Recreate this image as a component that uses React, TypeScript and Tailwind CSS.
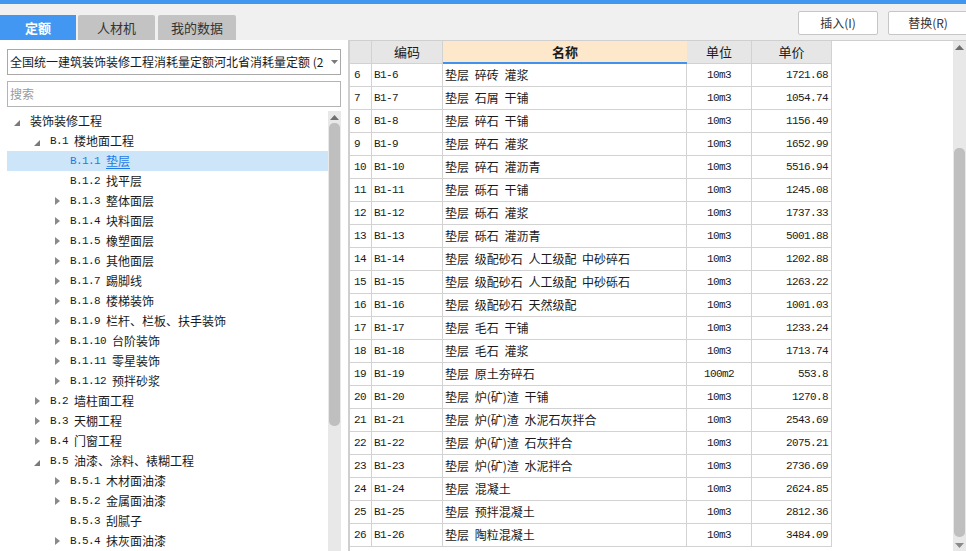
import React from 'react'

type TreeNode = {
  level: number
  code: string
  name: string
  arrow: 'open' | 'closed' | null
  selected?: boolean
}

const tree: TreeNode[] = [
  { level: 0, code: '', name: '装饰装修工程', arrow: 'open' },
  { level: 1, code: 'B.1', name: '楼地面工程', arrow: 'open' },
  { level: 2, code: 'B.1.1', name: '垫层', arrow: null, selected: true },
  { level: 2, code: 'B.1.2', name: '找平层', arrow: null },
  { level: 2, code: 'B.1.3', name: '整体面层', arrow: 'closed' },
  { level: 2, code: 'B.1.4', name: '块料面层', arrow: 'closed' },
  { level: 2, code: 'B.1.5', name: '橡塑面层', arrow: 'closed' },
  { level: 2, code: 'B.1.6', name: '其他面层', arrow: 'closed' },
  { level: 2, code: 'B.1.7', name: '踢脚线', arrow: 'closed' },
  { level: 2, code: 'B.1.8', name: '楼梯装饰', arrow: 'closed' },
  { level: 2, code: 'B.1.9', name: '栏杆、栏板、扶手装饰', arrow: 'closed' },
  { level: 2, code: 'B.1.10', name: '台阶装饰', arrow: 'closed' },
  { level: 2, code: 'B.1.11', name: '零星装饰', arrow: 'closed' },
  { level: 2, code: 'B.1.12', name: '预拌砂浆', arrow: 'closed' },
  { level: 1, code: 'B.2', name: '墙柱面工程', arrow: 'closed' },
  { level: 1, code: 'B.3', name: '天棚工程', arrow: 'closed' },
  { level: 1, code: 'B.4', name: '门窗工程', arrow: 'closed' },
  { level: 1, code: 'B.5', name: '油漆、涂料、裱糊工程', arrow: 'open' },
  { level: 2, code: 'B.5.1', name: '木材面油漆', arrow: 'closed' },
  { level: 2, code: 'B.5.2', name: '金属面油漆', arrow: 'closed' },
  { level: 2, code: 'B.5.3', name: '刮腻子', arrow: null },
  { level: 2, code: 'B.5.4', name: '抹灰面油漆', arrow: 'closed' },
]

const rows: [number, string, string, string, string][] = [
  [6, 'B1-6', '垫层 碎砖 灌浆', '10m3', '1721.68'],
  [7, 'B1-7', '垫层 石屑 干铺', '10m3', '1054.74'],
  [8, 'B1-8', '垫层 碎石 干铺', '10m3', '1156.49'],
  [9, 'B1-9', '垫层 碎石 灌浆', '10m3', '1652.99'],
  [10, 'B1-10', '垫层 碎石 灌沥青', '10m3', '5516.94'],
  [11, 'B1-11', '垫层 砾石 干铺', '10m3', '1245.08'],
  [12, 'B1-12', '垫层 砾石 灌浆', '10m3', '1737.33'],
  [13, 'B1-13', '垫层 砾石 灌沥青', '10m3', '5001.88'],
  [14, 'B1-14', '垫层 级配砂石 人工级配 中砂碎石', '10m3', '1202.88'],
  [15, 'B1-15', '垫层 级配砂石 人工级配 中砂砾石', '10m3', '1263.22'],
  [16, 'B1-16', '垫层 级配砂石 天然级配', '10m3', '1001.03'],
  [17, 'B1-17', '垫层 毛石 干铺', '10m3', '1233.24'],
  [18, 'B1-18', '垫层 毛石 灌浆', '10m3', '1713.74'],
  [19, 'B1-19', '垫层 原土夯碎石', '100m2', '553.8'],
  [20, 'B1-20', '垫层 炉(矿)渣 干铺', '10m3', '1270.8'],
  [21, 'B1-21', '垫层 炉(矿)渣 水泥石灰拌合', '10m3', '2543.69'],
  [22, 'B1-22', '垫层 炉(矿)渣 石灰拌合', '10m3', '2075.21'],
  [23, 'B1-23', '垫层 炉(矿)渣 水泥拌合', '10m3', '2736.69'],
  [24, 'B1-24', '垫层 混凝土', '10m3', '2624.85'],
  [25, 'B1-25', '垫层 预拌混凝土', '10m3', '2812.36'],
  [26, 'B1-26', '垫层 陶粒混凝土', '10m3', '3484.09'],
]

const cjk = "font-['Noto_Sans_CJK_SC',sans-serif]"
const mono = "font-['Liberation_Mono','Noto_Sans_CJK_SC',monospace] text-[11px] tracking-[-0.6px]"

function Arrow({ kind }: { kind: 'open' | 'closed' | null }): JSX.Element {
  if (kind === 'open') {
    return (
      <svg width="6" height="6" viewBox="0 0 6 6" className="mt-[4px]">
        <polygon points="6,0 6,6 0,6" fill="#7a7a7a" />
      </svg>
    )
  }
  if (kind === 'closed') {
    return (
      <svg width="5" height="8" viewBox="0 0 5 8">
        <polygon points="0,0 5,4 0,8" fill="#8a8a8a" />
      </svg>
    )
  }
  return <span />
}

function Scrollbar({ thumbTop, thumbHeight, downArrow }: { thumbTop: number; thumbHeight: number; downArrow?: boolean }): JSX.Element {
  return (
    <div className="relative h-full w-[13px] bg-[#e8e8e8]">
      <svg width="9" height="5" viewBox="0 0 9 5" className="absolute left-[2px] top-[4px]">
        <polygon points="0,5 4.5,0 9,5" fill="#6f6f6f" />
      </svg>
      <div
        className="absolute left-[1px] w-[11px] rounded-[5px] bg-[#bfbfbf]"
        style={{ top: thumbTop, height: thumbHeight }}
      />
      {downArrow ? (
        <svg width="9" height="5" viewBox="0 0 9 5" className="absolute bottom-[3px] left-[2px]">
          <polygon points="0,0 4.5,5 9,0" fill="#8a8a8a" />
        </svg>
      ) : null}
    </div>
  )
}

function App(): JSX.Element {
  return (
    <div className={`flex h-[551px] w-[966px] flex-col overflow-hidden bg-white text-[#1a1a1a] ${cjk}`}>
      <div className="h-[4px] bg-[#4197ef]" />

      {/* header: tabs + buttons */}
      <div className="flex h-[36px] bg-[#f0f0f0]">
        <div className="flex items-end">
          <div className="flex h-[25px] w-[76px] items-center justify-center bg-[#4197f2] text-[13px] font-bold text-white">
            定额
          </div>
          <div className="ml-[2px] flex h-[25px] w-[77px] items-center justify-center rounded-t-[2px] bg-[#c3c3c3] text-[13px] text-[#333]">
            人材机
          </div>
          <div className="ml-[3px] flex h-[25px] w-[78px] items-center justify-center rounded-t-[2px] bg-[#c3c3c3] text-[13px] text-[#333]">
            我的数据
          </div>
        </div>
        <div className="ml-auto mr-[-2px] flex gap-[10px] pt-[7px]">
          <button className="flex h-[24px] w-[80px] items-center justify-center rounded-[2px] border border-[#c6c6c6] bg-white text-[12px] text-[#333]">
            插入(I)
          </button>
          <button className="flex h-[24px] w-[80px] items-center justify-center rounded-[2px] border border-[#c6c6c6] bg-white text-[12px] text-[#333]">
            替换(R)
          </button>
        </div>
      </div>

      <div className="flex min-h-0 flex-1">
        {/* left panel */}
        <div className="flex w-[348px] flex-col bg-white px-[7px] pt-[9px]">
          <div className="flex h-[26px] items-center border border-[#a8a8a8] pl-[2px]">
            <div className="w-[314px] overflow-hidden whitespace-nowrap text-[12px]">
              全国统一建筑装饰装修工程消耗量定额河北省消耗量定额 (20
            </div>
            <svg width="7" height="4" viewBox="0 0 7 4" className="ml-[7px]">
              <polygon points="0,0 7,0 3.5,4" fill="#7a7a7a" />
            </svg>
          </div>
          <div className="mt-[6px] flex h-[26px] items-center border border-[#b4b4b4] pl-[2px] text-[12px] text-[#9a9a9a]">
            搜索
          </div>
          <div className="mt-[4px] flex min-h-0 flex-1">
            <div className="w-[322px]">
              {tree.map((n, i) => (
                <div
                  key={i}
                  className={`flex h-[20px] items-center whitespace-nowrap text-[12px] ${n.selected ? 'bg-[#cce5f8] text-[#1f7ae6]' : ''}`}
                >
                  <div
                    className="flex w-[10px] justify-center"
                    style={{ marginLeft: 5 + n.level * 20 }}
                  >
                    <Arrow kind={n.arrow} />
                  </div>
                  <div className="ml-[8px] flex items-center">
                    {n.code ? <span className={`${mono} mr-[6px]`}>{n.code}</span> : null}
                    <span className={n.selected ? 'underline underline-offset-2' : ''}>{n.name}</span>
                  </div>
                </div>
              ))}
            </div>
            <Scrollbar thumbTop={12} thumbHeight={303} />
          </div>
        </div>

        {/* right panel */}
        <div className="flex flex-1 border-l-2 border-t border-[#cfcfcf] bg-white">
          <div className="w-[482px]">
            <div className="grid grid-cols-[22px_71px_244px_65px_80px] text-[13px]">
              <div className="h-[23px] border-b border-r border-[#d2d2d2] bg-[#e6e6e6]" />
              <div className="flex h-[23px] items-center justify-center border-b border-r border-[#d2d2d2] bg-[#e6e6e6]">编码</div>
              <div className="flex h-[23px] items-center justify-center border-b-2 border-[#3f92ee] bg-[#fde8cb] font-bold">名称</div>
              <div className="flex h-[23px] items-center justify-center border-b border-r border-[#d2d2d2] bg-[#e6e6e6]">单位</div>
              <div className="flex h-[23px] items-center justify-center border-b border-r border-[#d2d2d2] bg-[#e6e6e6]">单价</div>
            </div>
            {rows.map(([idx, code, name, unit, price]) => (
              <div key={idx} className="grid h-[23px] grid-cols-[22px_71px_244px_65px_80px] text-[12px]">
                <div className={`flex items-center border-b border-r border-[#d2d2d2] pl-[4px] ${mono}`}>{idx}</div>
                <div className={`flex items-center border-b border-r border-[#d2d2d2] pl-[2px] ${mono}`}>{code}</div>
                <div className="flex items-center whitespace-pre border-b border-r border-[#d2d2d2] pl-[2px] [word-spacing:3px]">{name}</div>
                <div className={`flex items-center justify-center border-b border-r border-[#d2d2d2] ${mono}`}>{unit}</div>
                <div className={`flex items-center justify-end border-b border-r border-[#d2d2d2] pr-[3px] ${mono}`}>{price}</div>
              </div>
            ))}
          </div>
          <div className="ml-auto h-full">
            <Scrollbar thumbTop={107} thumbHeight={389} downArrow />
          </div>
        </div>
      </div>
    </div>
  )
}

export default App
